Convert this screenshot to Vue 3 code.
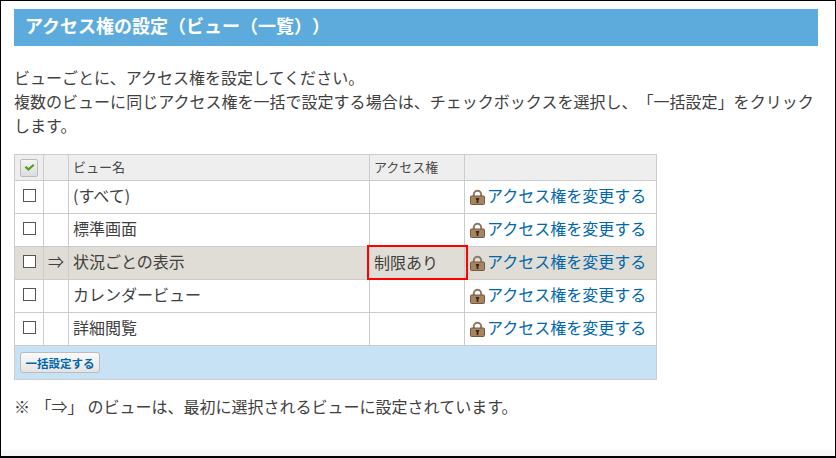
<script setup>
const rows = [
  { name: '(すべて)' },
  { name: '標準画面' },
  { name: '状況ごとの表示', active: true, access: '制限あり' },
  { name: 'カレンダービュー' },
  { name: '詳細閲覧' },
]
</script>

<template>
  <div class="frame">
    <div class="content">
      <h1 class="title">アクセス権の設定（ビュー（一覧））</h1>
      <p class="intro">ビューごとに、アクセス権を設定してください。<br />複数のビューに同じアクセス権を一括で設定する場合は、チェックボックスを選択し、「一括設定」をクリックします。</p>
      <div class="table">
        <div class="row head">
          <div class="cell c1"><span class="allcheck"><svg width="11" height="9" viewBox="0 0 11 9"><path d="M0.5 4.5L2.5 3l2 2L9 1l1.5 1.5L4.5 8z" fill="#4fa31c" /></svg></span></div>
          <div class="cell c2"></div>
          <div class="cell c3">ビュー名</div>
          <div class="cell c4">アクセス権</div>
          <div class="cell c5"></div>
        </div>
        <div v-for="r in rows" :key="r.name" class="row item" :class="{ active: r.active }">
          <div class="cell c1"><span class="box"></span></div>
          <div class="cell c2 arrow">{{ r.active ? '⇒' : '' }}</div>
          <div class="cell c3">{{ r.name }}</div>
          <div class="cell c4"><span v-if="r.access" class="mark">{{ r.access }}</span></div>
          <div class="cell c5">
            <svg class="lock" width="15" height="16" viewBox="0 0 15 16">
              <path d="M2.8 8V5.5a4.7 4.7 0 0 1 9.4 0V8h-2V5.5a2.7 2.7 0 0 0-5.4 0V8z" fill="#8c7866" />
              <rect x="0.5" y="7" width="14" height="8.5" rx="1" fill="#a88560" stroke="#73593f" />
              <path d="M5.8 9h3.4v1.6l-.8.5v3H6.6v-3l-.8-.5z" fill="#37271a" />
            </svg><a class="link">アクセス権を変更する</a>
          </div>
        </div>
        <div class="foot"><button class="bulk">一括設定する</button></div>
      </div>
      <p class="note">※ <span class="quote">「⇒」</span>のビューは、最初に選択されるビューに設定されています。</p>
    </div>
  </div>
</template>

<style scoped>
.frame {
  box-sizing: border-box;
  width: 836px;
  height: 458px;
  border: 1px solid #000;
  border-bottom-width: 2px;
  background: #fff;
  color: #404040;
  font-family: "Noto Sans CJK JP", "Liberation Sans", sans-serif;
  font-size: 16px;
  text-spacing-trim: space-all;
  box-shadow: inset 0 -6px 0 #f7f7f7;
}
.content {
  padding: 8px 17px 0 13px;
}
.title {
  margin: 0;
  height: 37px;
  line-height: 33px;
  padding-left: 11px;
  background: #5dabdc;
  color: #fff;
  font-size: 18px;
  font-weight: 700;
}
.intro {
  margin: 19px 0 0;
  line-height: 24px;
  letter-spacing: 0.02px;
}
.table {
  margin-top: 17px;
  width: 643px;
  border: 1px solid #ccc;
  box-sizing: border-box;
}
.row {
  display: grid;
  grid-template-columns: 29px 25px 301px 95px 1fr;
  grid-template-rows: 100%;
}
.row.head {
  height: 25px;
  background: #eee;
  font-size: 13px;
  color: #484848;
}
.row.item {
  height: 33px;
  border-top: 1px solid #ccc;
  box-sizing: border-box;
}
.row.active {
  background: #e0ddd6;
}
.cell {
  display: flex;
  align-items: center;
  box-sizing: border-box;
  border-right: 1px solid #ccc;
  padding-left: 4px;
  padding-bottom: 5px;
}
.head .cell {
  padding-bottom: 2px;
}
.head .c1 {
  padding-left: 5px;
  padding-bottom: 0;
}
.allcheck {
  display: flex;
  align-items: center;
  justify-content: center;
  width: 18px;
  height: 18px;
  box-sizing: border-box;
  border: 1px solid #bbb;
  border-radius: 2px;
  background: linear-gradient(#f4f4f4, #ddd);
}
.box {
  width: 13px;
  height: 13px;
  box-sizing: border-box;
  border: 1px solid #555;
  background: #fff;
  margin-left: 3px;
}
.item .c1 {
  padding-left: 5px;
  padding-bottom: 3px;
}
.c4 {
  position: relative;
}
.mark {
  position: absolute;
  top: -2px;
  left: -3px;
  display: flex;
  align-items: center;
  height: 35px;
  width: 101px;
  box-sizing: border-box;
  border: 2px solid #f00;
  padding: 0 0 2px 5px;
  z-index: 1;
}
.c5 {
  border-right: 0;
  padding-left: 5px;
}
.lock {
  flex: none;
  margin-top: 4px;
}
.link {
  color: #0067ac;
  margin-left: 2px;
}
.foot {
  height: 34px;
  border-top: 1px solid #ccc;
  background: #c8e2f5;
  box-sizing: border-box;
  display: flex;
  align-items: center;
  padding-left: 5px;
}
.bulk {
  box-sizing: border-box;
  height: 21px;
  width: 80px;
  padding: 0;
  border: 1px solid #bbb;
  border-radius: 3px;
  background: linear-gradient(#fafafa, #e4e4e4);
  color: #0067ac;
  font: 700 11.5px "Noto Sans CJK JP", sans-serif;
}
.note {
  margin: 15px 0 0;
  line-height: 22px;
}
.quote {
  margin: 0 4px 0 2px;
}
</style>
